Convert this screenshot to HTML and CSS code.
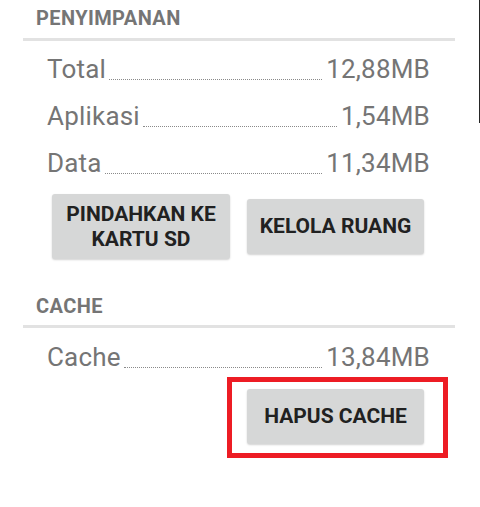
FILE: index.html
```html
<!DOCTYPE html>
<html lang="id">
<head>
<meta charset="utf-8">
<title>Penyimpanan</title>
<link rel="stylesheet" href="styles.css">
</head>
<body>
<div class="screen">
  <main class="content">
    <section class="section section-storage">
      <h2 class="section-title">PENYIMPANAN</h2>
      <div class="divider"></div>
      <div class="rows">
        <div class="row"><span class="label">Total</span><span class="leader"></span><span class="value">12,88MB</span></div>
        <div class="row"><span class="label">Aplikasi</span><span class="leader"></span><span class="value">1,54MB</span></div>
        <div class="row"><span class="label">Data</span><span class="leader"></span><span class="value">11,34MB</span></div>
      </div>
      <div class="button-row">
        <button class="btn btn-tall">PINDAHKAN KE<br>KARTU SD</button>
        <button class="btn">KELOLA RUANG</button>
      </div>
    </section>
    <section class="section section-cache">
      <h2 class="section-title">CACHE</h2>
      <div class="divider"></div>
      <div class="rows">
        <div class="row"><span class="label">Cache</span><span class="leader"></span><span class="value">13,84MB</span></div>
      </div>
      <div class="highlight">
        <button class="btn">HAPUS CACHE</button>
      </div>
    </section>
  </main>
  <div class="edge"></div>
</div>
</body>
</html>
```

FILE: styles.css
```css
html, body {
  margin: 0;
  padding: 0;
  background: #ffffff;
}

body {
  font-family: Roboto, "Liberation Sans", sans-serif;
  width: 480px;
  height: 507px;
  overflow: hidden;
}

.screen {
  display: flex;
  width: 480px;
  height: 507px;
}

.content {
  width: 432px;
  margin-left: 23px;
  display: flex;
  flex-direction: column;
}

.edge {
  margin-left: 24px;
  width: 1px;
  height: 123px;
  background: #262626;
}

.section {
  display: flex;
  flex-direction: column;
}

.section-title {
  margin: 0;
  padding-left: 13px;
  font-size: 20px;
  line-height: 20px;
  font-weight: 700;
  letter-spacing: 0.4px;
  color: #757575;
}

.section-storage .section-title {
  padding-top: 8px;
}

.section-cache .section-title {
  margin-top: 37px;
}

.divider {
  height: 3px;
  background: #e2e2e2;
  margin-top: 10px;
}

.section-cache .divider {
  margin-top: 9px;
}

.rows {
  padding: 0 25px 0 24px;
  margin-top: 5px;
}

.section-cache .rows {
  margin-top: 6px;
}

.row {
  display: flex;
  align-items: baseline;
  font-size: 26px;
  line-height: 47px;
  letter-spacing: 0.2px;
  color: #757575;
}

.leader {
  flex: 1;
  margin: 0 4px 0 3px;
  border-bottom: 1px dotted #8a8a8a;
  transform: translateY(2px);
}

.button-row {
  display: flex;
  align-items: center;
  gap: 17px;
  padding-left: 29px;
  margin-top: 7px;
}

.btn {
  font-family: Roboto, "Liberation Sans", sans-serif;
  font-size: 21px;
  line-height: 24.5px;
  font-weight: 700;
  color: #212121;
  background: #d6d7d7;
  border: none;
  border-radius: 3px;
  box-shadow: 0 1px 2px rgba(0, 0, 0, 0.18);
  width: 177px;
  min-height: 55px;
  padding: 8px 4px;
  display: flex;
  align-items: center;
  justify-content: center;
  text-align: center;
}

.btn-tall {
  width: 178px;
}

.highlight {
  align-self: flex-end;
  margin-right: 7px;
  margin-top: -4px;
  border: 5px solid #ed1c24;
  padding: 7px 19px 9px 15px;
}
```
